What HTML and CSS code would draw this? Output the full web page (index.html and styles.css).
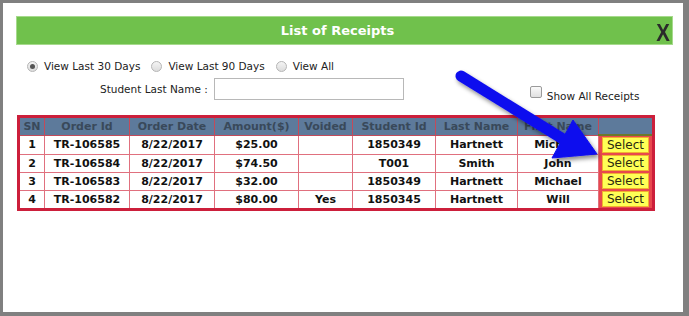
FILE: index.html
```html
<!DOCTYPE html>
<html lang="en">
<head>
    <meta charset="UTF-8">
    <title>List of Receipts</title>
    <link rel="stylesheet" href="styles.css">
</head>
<body>

<div class="dialog">
    <div class="dialog-header">
        <span class="dialog-title">List of Receipts</span>
        <span class="close-btn">X</span>
    </div>

    <div class="filter-row">
        <label class="radio"><span class="radio-dot checked"></span>View Last 30 Days</label>
        <label class="radio"><span class="radio-dot"></span>View Last 90 Days</label>
        <label class="radio"><span class="radio-dot"></span>View All</label>
    </div>

    <div class="search-row">
        <span class="search-label">Student Last Name :</span>
        <span class="search-input"></span>
        <label class="show-all"><span class="check-box"></span>Show All Receipts</label>
    </div>

    <table class="receipts">
        <thead>
            <tr>
                <th class="c-sn">SN</th>
                <th class="c-order">Order Id</th>
                <th class="c-date">Order Date</th>
                <th class="c-amt">Amount($)</th>
                <th class="c-void">Voided</th>
                <th class="c-sid">Student Id</th>
                <th class="c-last">Last Name</th>
                <th class="c-first">First Name</th>
                <th class="c-sel"></th>
            </tr>
        </thead>
        <tbody>
            <tr>
                <td>1</td><td>TR-106585</td><td>8/22/2017</td><td>$25.00</td><td></td>
                <td>1850349</td><td>Hartnett</td><td>Michael</td>
                <td class="sel-cell"><span class="select-btn">Select</span></td>
            </tr>
            <tr>
                <td>2</td><td>TR-106584</td><td>8/22/2017</td><td>$74.50</td><td></td>
                <td>T001</td><td>Smith</td><td>John</td>
                <td class="sel-cell"><span class="select-btn">Select</span></td>
            </tr>
            <tr>
                <td>3</td><td>TR-106583</td><td>8/22/2017</td><td>$32.00</td><td></td>
                <td>1850349</td><td>Hartnett</td><td>Michael</td>
                <td class="sel-cell"><span class="select-btn">Select</span></td>
            </tr>
            <tr>
                <td>4</td><td>TR-106582</td><td>8/22/2017</td><td>$80.00</td><td>Yes</td>
                <td>1850345</td><td>Hartnett</td><td>Will</td>
                <td class="sel-cell"><span class="select-btn">Select</span></td>
            </tr>
        </tbody>
    </table>

    <!-- annotation arrow drawn over the dialog -->
    <svg class="arrow" width="689" height="316" viewBox="0 0 689 316">
        <defs>
            <filter id="shadow" x="-20%" y="-20%" width="140%" height="140%">
                <feDropShadow dx="2" dy="3" stdDeviation="2" flood-color="#000" flood-opacity="0.45"/>
            </filter>
        </defs>
        <g filter="url(#shadow)" fill="#1111ee" stroke="#1111ee">
            <line x1="461" y1="76" x2="563" y2="139" stroke-width="11" stroke-linecap="round"/>
            <polygon points="597,154 573,120 552,158" stroke-width="1" stroke-linejoin="round"/>
        </g>
    </svg>
</div>

</body>
</html>
```

FILE: styles.css
```css
body {
    margin: 0;
    background: #808080;
    font-family: "DejaVu Sans", Verdana, sans-serif;
    color: #111;
}

.dialog {
    position: relative;
    margin: 3px 6px 0 3px;
    height: 309px;
    background: #fff;
    padding: 13px 10px 0 13px;
    box-sizing: border-box;
}

.dialog-header {
    position: relative;
    height: 29px;
    background: #70c14c;
    border: 1px solid #a6da8c;
    box-sizing: border-box;
    display: flex;
    align-items: center;
    justify-content: center;
}

.dialog-title {
    color: #fff;
    font-weight: bold;
    font-size: 13px;
    margin-right: 14px;
}

.close-btn {
    position: absolute;
    right: 1px;
    top: 2px;
    font-family: "Liberation Sans", Arial, sans-serif;
    font-weight: bold;
    font-size: 24px;
    color: #2b2b2b;
    transform: scaleX(0.85);
}

.filter-row {
    display: flex;
    align-items: center;
    margin: 15px 0 0 11px;
    font-size: 10.5px;
    color: #222;
}

.radio {
    display: flex;
    align-items: center;
    margin-right: 11px;
}

.radio-dot {
    width: 11px;
    height: 11px;
    border-radius: 50%;
    border: 1px solid #b5b5b5;
    background: linear-gradient(#f4f4f4, #dcdcdc);
    box-sizing: border-box;
    margin-right: 6px;
    position: relative;
}

.radio-dot.checked::after {
    content: "";
    position: absolute;
    left: 2px;
    top: 2px;
    width: 5px;
    height: 5px;
    border-radius: 50%;
    background: #555;
}

.search-row {
    display: flex;
    align-items: center;
    margin-top: 4px;
    font-size: 10.5px;
    color: #222;
}

.search-label {
    margin-left: 84px;
}

.search-input {
    width: 190px;
    height: 22px;
    border: 1px solid #b8b8b8;
    box-sizing: border-box;
    margin-left: 6px;
}

.show-all {
    display: flex;
    align-items: center;
    margin-left: 126px;
    margin-top: 14px;
}

.check-box {
    width: 12px;
    height: 12px;
    border: 1px solid #9a9a9a;
    border-radius: 2px;
    background: linear-gradient(#fafafa, #e0e0e0);
    box-sizing: border-box;
    margin-right: 5px;
    margin-top: -8px;
}

.receipts {
    margin-top: 13px;
    margin-left: 1px;
    width: 600px;
    border-collapse: collapse;
    border: 3px solid #cc1f3b;
    font-size: 11px;
    font-weight: bold;
    table-layout: fixed;
}

.receipts th {
    background: #5d7a9b;
    color: #39495a;
    height: 16px;
    padding: 0;
    border: 1px solid #c24a5a;
    font-size: 11px;
}

.receipts td {
    height: 16px;
    padding: 0;
    text-align: center;
    border: 1px solid #e0707e;
    color: #111;
}

.c-sn { width: 24px; }
.c-order { width: 84px; }
.c-date { width: 84px; }
.c-amt { width: 83px; }
.c-void { width: 53px; }
.c-sid { width: 82px; }
.c-last { width: 81px; }
.c-first { width: 80px; }
.c-sel { width: 53px; }

.receipts th.c-sel {
    border-bottom: 2px solid #6b7a2a;
}

.receipts td.sel-cell {
    background: #e8484e;
    border: none;
    padding: 1px 3px;
}

.select-btn {
    display: block;
    background: #ffff55;
    border: 1px solid #f0b030;
    color: #2a2a10;
    font-weight: normal;
    font-size: 12px;
    line-height: 14px;
}

.arrow {
    position: absolute;
    left: -3px;
    top: -3px;
    pointer-events: none;
}
```
